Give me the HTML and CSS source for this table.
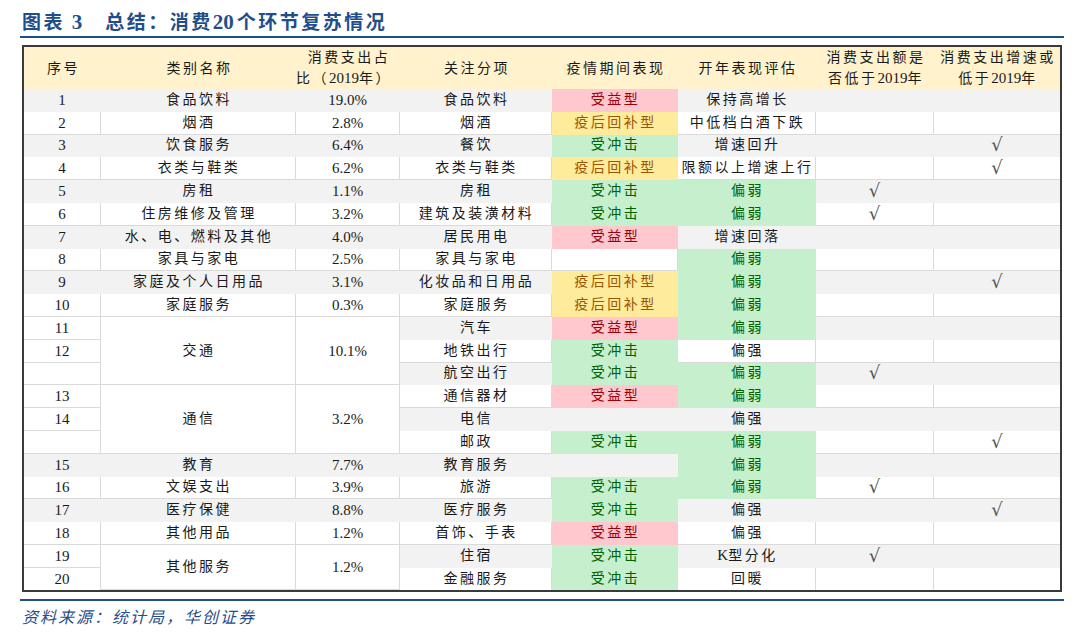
FILE: index.html
```html
<!DOCTYPE html>
<html lang="zh-CN">
<head>
<meta charset="utf-8">
<title>图表 3 总结：消费20个环节复苏情况</title>
<link rel="stylesheet" href="styles.css">
</head>
<body>
<div class="page">
  <div class="title"><span class="t1">图表 <span class="tn">3</span></span><span class="t2">总结：消费<span class="tn">20</span>个环节复苏情况</span></div>
  <table class="tbl">
    <colgroup>
      <col class="c1"><col class="c2"><col class="c3"><col class="c4"><col class="c5"><col class="c6"><col class="c7"><col class="c8">
    </colgroup>
    <thead>
      <tr>
        <th>序号</th>
        <th>类别名称</th>
        <th>消费支出占<br><span class="ind">比（<span class="num">2019</span>年）</span></th>
        <th>关注分项</th>
        <th>疫情期间表现</th>
        <th>开年表现评估</th>
        <th>消费支出额是<br>否低于<span class="num">2019</span>年</th>
        <th>消费支出增速或<br>低于<span class="num">2019</span>年</th>
      </tr>
    </thead>
    <tbody>
      <tr class="g"><td class="num">1</td><td>食品饮料</td><td class="num">19.0%</td><td>食品饮料</td><td class="p">受益型</td><td>保持高增长</td><td></td><td></td></tr>
      <tr><td class="num">2</td><td>烟酒</td><td class="num">2.8%</td><td>烟酒</td><td class="y">疫后回补型</td><td>中低档白酒下跌</td><td></td><td></td></tr>
      <tr class="g"><td class="num">3</td><td>饮食服务</td><td class="num">6.4%</td><td>餐饮</td><td class="gr">受冲击</td><td>增速回升</td><td></td><td class="ck">√</td></tr>
      <tr><td class="num">4</td><td>衣类与鞋类</td><td class="num">6.2%</td><td>衣类与鞋类</td><td class="y">疫后回补型</td><td>限额以上增速上行</td><td></td><td class="ck">√</td></tr>
      <tr class="g"><td class="num">5</td><td>房租</td><td class="num">1.1%</td><td>房租</td><td class="gr">受冲击</td><td class="gr">偏弱</td><td class="ck">√</td><td></td></tr>
      <tr><td class="num">6</td><td>住房维修及管理</td><td class="num">3.2%</td><td>建筑及装潢材料</td><td class="gr">受冲击</td><td class="gr">偏弱</td><td class="ck">√</td><td></td></tr>
      <tr class="g"><td class="num">7</td><td>水、电、燃料及其他</td><td class="num">4.0%</td><td>居民用电</td><td class="p">受益型</td><td>增速回落</td><td></td><td></td></tr>
      <tr><td class="num">8</td><td>家具与家电</td><td class="num">2.5%</td><td>家具与家电</td><td></td><td class="gr">偏弱</td><td></td><td></td></tr>
      <tr class="g"><td class="num">9</td><td>家庭及个人日用品</td><td class="num">3.1%</td><td>化妆品和日用品</td><td class="y">疫后回补型</td><td class="gr">偏弱</td><td></td><td class="ck">√</td></tr>
      <tr><td class="num">10</td><td>家庭服务</td><td class="num">0.3%</td><td>家庭服务</td><td class="y">疫后回补型</td><td class="gr">偏弱</td><td></td><td></td></tr>
      <tr class="g"><td class="num w">11</td><td class="w" rowspan="3">交通</td><td class="num w" rowspan="3">10.1%</td><td>汽车</td><td class="p">受益型</td><td class="gr">偏弱</td><td></td><td></td></tr>
      <tr><td class="num">12</td><td>地铁出行</td><td class="gr">受冲击</td><td>偏强</td><td></td><td></td></tr>
      <tr class="g"><td class="w"></td><td>航空出行</td><td class="gr">受冲击</td><td class="gr">偏弱</td><td class="ck">√</td><td></td></tr>
      <tr><td class="num">13</td><td rowspan="3">通信</td><td class="num" rowspan="3">3.2%</td><td>通信器材</td><td class="p">受益型</td><td class="gr">偏弱</td><td></td><td></td></tr>
      <tr class="g"><td class="num w">14</td><td>电信</td><td></td><td>偏强</td><td></td><td></td></tr>
      <tr><td></td><td>邮政</td><td class="gr">受冲击</td><td class="gr">偏弱</td><td></td><td class="ck">√</td></tr>
      <tr class="g"><td class="num">15</td><td>教育</td><td class="num">7.7%</td><td>教育服务</td><td></td><td class="gr">偏弱</td><td></td><td></td></tr>
      <tr><td class="num">16</td><td>文娱支出</td><td class="num">3.9%</td><td>旅游</td><td class="gr">受冲击</td><td class="gr">偏弱</td><td class="ck">√</td><td></td></tr>
      <tr class="g"><td class="num">17</td><td>医疗保健</td><td class="num">8.8%</td><td>医疗服务</td><td class="gr">受冲击</td><td>偏强</td><td></td><td class="ck">√</td></tr>
      <tr><td class="num">18</td><td>其他用品</td><td class="num">1.2%</td><td>首饰、手表</td><td class="p">受益型</td><td>偏强</td><td></td><td></td></tr>
      <tr class="g"><td class="num w">19</td><td class="w" rowspan="2">其他服务</td><td class="num w" rowspan="2">1.2%</td><td>住宿</td><td class="gr">受冲击</td><td><span class="num">K</span>型分化</td><td class="ck">√</td><td></td></tr>
      <tr class="last"><td class="num">20</td><td>金融服务</td><td class="gr">受冲击</td><td>回暖</td><td></td><td></td></tr>
    </tbody>
  </table>
  <div class="src">资料来源：统计局，华创证券</div>
</div>
</body>
</html>
```
FILE: styles.css
```css
html, body {
  margin: 0;
  padding: 0;
  background: #ffffff;
}

.page {
  width: 1044px;
  margin-left: 20px;
}

.title {
  height: 38px;
  box-sizing: border-box;
  padding-top: 3px;
  line-height: 35px;
  border-bottom: 2px solid #1f4e8c;
  color: #1f4e8c;
  font-family: "Noto Sans CJK SC", sans-serif;
  font-weight: 700;
  font-size: 19px;
  letter-spacing: 2.5px;
  padding-left: 2px;
  white-space: nowrap;
}

.tn {
  font-family: "Liberation Serif", serif;
  font-size: 21px;
  font-weight: 700;
  letter-spacing: 0;
  margin-right: 3px;
}

.t1 {
  margin-right: 20px;
}

.tbl {
  margin-top: 7px;
  margin-left: 2px;
  width: 1040px;
  table-layout: fixed;
  border-collapse: separate;
  border-spacing: 0;
  border: 2px solid #3a3a3a;
  font-family: "Liberation Serif", "Noto Sans CJK SC", serif;
  font-size: 14px;
  color: #1a1a1a;
  letter-spacing: 2.5px;
}

.c1 { width: 77px; }
.c2 { width: 195px; }
.c3 { width: 104px; }
.c4 { width: 152px; }
.c5 { width: 126px; }
.c6 { width: 138px; }
.c7 { width: 118px; }
.c8 { width: 126px; }

.tbl th {
  height: 37px;
  padding: 0 0 0 2px;
  background: #fff2cc;
  font-weight: 400;
  line-height: 21px;
  text-align: center;
  vertical-align: middle;
  white-space: nowrap;
}

.tbl td {
  height: 21.8px;
  padding: 0 0 0 2px;
  line-height: 20px;
  text-align: center;
  vertical-align: middle;
  white-space: nowrap;
  background: #ffffff;
  border-right: 1px solid #dadada;
  border-bottom: 1px solid #dadada;
}

.tbl td:last-child {
  border-right: none;
}

.tbl tr.last td {
  border-bottom: none;
}

.tbl tr.g td {
  background: #f2f2f2;
  border-color: #f2f2f2;
}

.tbl tr.g td.w,
.tbl td.w {
  background: #ffffff;
  border-color: #dadada;
}

.num {
  letter-spacing: 0;
  font-size: 15px;
  padding-left: 0;
}

.tbl td.num {
  padding-left: 0;
}

.ind {
  margin-left: -10px;
}

.tbl td.p,
.tbl tr.g td.p {
  background: #ffc7ce;
  border-color: #ffc7ce;
  color: #9c0006;
}

.tbl td.y,
.tbl tr.g td.y {
  background: #ffeb9c;
  border-color: #ffeb9c;
  color: #9c5700;
}

.tbl td.gr,
.tbl tr.g td.gr {
  background: #c6efce;
  border-color: #c6efce;
  color: #006100;
}

.tbl td.ck {
  color: #555555;
  font-family: "DejaVu Serif", serif;
  font-size: 18px;
  font-weight: 300;
  letter-spacing: 0;
  padding-left: 0;
}

.src {
  margin-top: 7px;
  border-top: 2px solid #1f4e8c;
  height: 30px;
  line-height: 30px;
  padding-left: 2px;
  color: #1f4e8c;
  font-family: "Noto Sans CJK SC", sans-serif;
  font-style: italic;
  font-size: 16px;
  letter-spacing: 2px;
}
```
